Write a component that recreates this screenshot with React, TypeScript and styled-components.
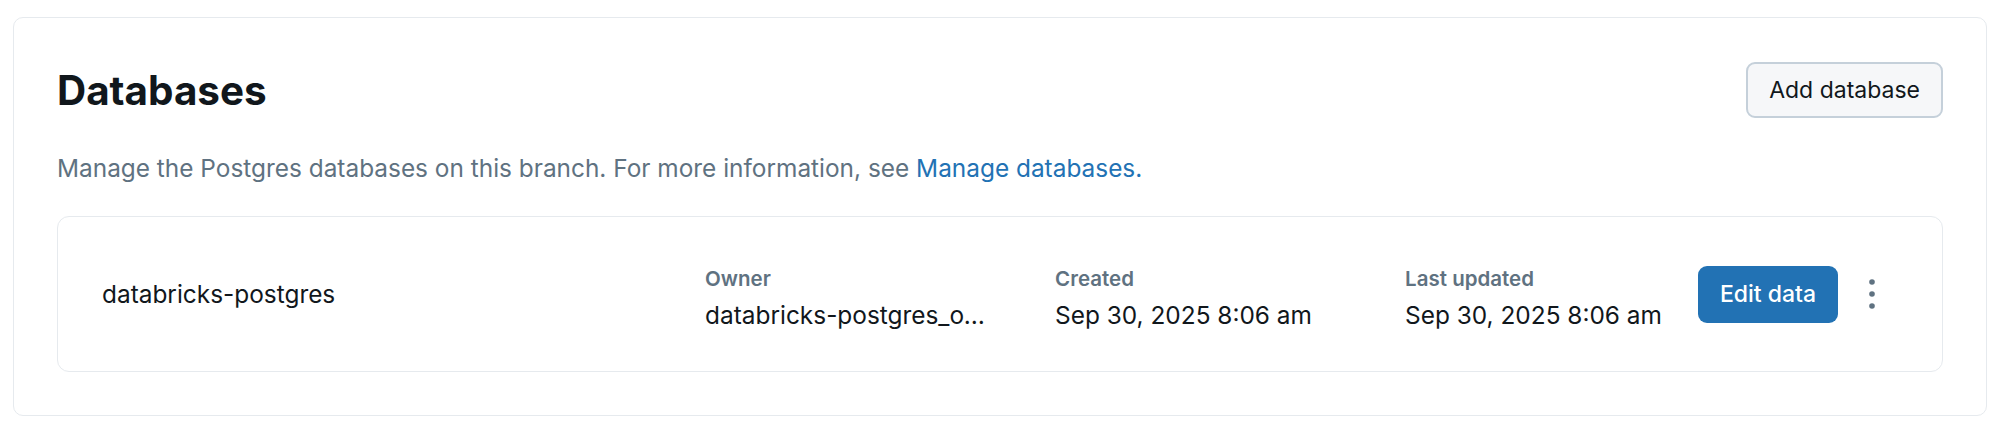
import React from "react";
import styled, { createGlobalStyle } from "styled-components";

const GlobalStyle = createGlobalStyle`
  html, body {
    margin: 0;
    padding: 0;
    background: #ffffff;
  }
  body {
    font-family: Inter, "Noto Sans", "Liberation Sans", sans-serif;
    color: #11171c;
    -webkit-font-smoothing: antialiased;
  }
  * { box-sizing: border-box; }
`;

const Page = styled.div`
  padding: 17px 13px 16px 13px;
`;

const Panel = styled.section`
  border: 1px solid #e6eaee;
  border-radius: 10px;
  padding: 44px 43px 43px 43px;
  background: #fff;
`;

const Header = styled.div`
  display: flex;
  align-items: center;
  justify-content: space-between;
  height: 56px;
`;

const Title = styled.h1`
  margin: 0;
  font-size: 40.4px;
  font-weight: 700;
  letter-spacing: 0;
  color: #11171c;
`;

const SecondaryButton = styled.button`
  height: 56px;
  padding: 0 21px;
  font-family: inherit;
  font-size: 23px;
  color: #11171c;
  background: #f6f7f9;
  border: 2px solid #c5d0da;
  border-radius: 9px;
  cursor: pointer;
`;

const Description = styled.p`
  margin: 34px 0 32px 0;
  font-size: 24.4px;
  line-height: 32px;
  color: #5f7281;
`;

const Link = styled.a`
  color: #2272b4;
  text-decoration: none;
`;

const Row = styled.div`
  display: flex;
  align-items: center;
  height: 156px;
  padding: 0 50px 0 44px;
  border: 1px solid #e6eaee;
  border-radius: 12px;
`;

const Name = styled.div`
  flex: 1;
  min-width: 0;
  font-size: 24.4px;
  color: #11171c;
`;

const Meta = styled.div<{ $width?: number; $gap?: number }>`
  display: flex;
  flex-direction: column;
  gap: 4px;
  margin-top: 8px;
  width: ${(p) => (p.$width ? `${p.$width}px` : "auto")};
  margin-right: ${(p) => p.$gap ?? 0}px;
  min-width: 0;
`;

const MetaLabel = styled.div`
  font-size: 20.5px;
  font-weight: 600;
  line-height: 30px;
  color: #5f7281;
`;

const MetaValue = styled.div`
  font-size: 24.4px;
  line-height: 34px;
  color: #11171c;
  white-space: nowrap;
  overflow: hidden;
  text-overflow: ellipsis;
`;

const Actions = styled.div`
  display: flex;
  align-items: center;
  gap: 14px;
  margin-left: 36px;
`;

const PrimaryButton = styled.button`
  height: 57px;
  padding: 0 22px;
  font-family: inherit;
  font-size: 23px;
  font-weight: 500;
  color: #ffffff;
  background: #2272b4;
  border: none;
  border-radius: 9px;
  cursor: pointer;
`;

const IconButton = styled.button`
  width: 40px;
  height: 48px;
  display: flex;
  align-items: center;
  justify-content: center;
  background: transparent;
  border: none;
  padding: 0;
  cursor: pointer;
  color: #5f7281;
`;

const KebabIcon = () => (
  <svg width="8" height="32" viewBox="0 0 8 32" fill="currentColor" aria-hidden>
    <circle cx="4" cy="4" r="2.8" />
    <circle cx="4" cy="16" r="2.8" />
    <circle cx="4" cy="28" r="2.8" />
  </svg>
);

const columns = [
  { label: "Owner", value: "databricks-postgres_owner_role", width: 290, gap: 60 },
  { label: "Created", value: "Sep 30, 2025 8:06 am", width: 290, gap: 60 },
  { label: "Last updated", value: "Sep 30, 2025 8:06 am" },
];

export default function App() {
  return (
    <>
      <GlobalStyle />
      <Page>
        <Panel>
          <Header>
            <Title>Databases</Title>
            <SecondaryButton>Add database</SecondaryButton>
          </Header>
          <Description>
            Manage the Postgres databases on this branch. For more information, see{" "}
            <Link href="#">Manage databases.</Link>
          </Description>
          <Row>
            <Name>databricks-postgres</Name>
            {columns.map((c) => (
              <Meta key={c.label} $width={c.width} $gap={c.gap}>
                <MetaLabel>{c.label}</MetaLabel>
                <MetaValue>{c.value}</MetaValue>
              </Meta>
            ))}
            <Actions>
              <PrimaryButton>Edit data</PrimaryButton>
              <IconButton aria-label="More">
                <KebabIcon />
              </IconButton>
            </Actions>
          </Row>
        </Panel>
      </Page>
    </>
  );
}
